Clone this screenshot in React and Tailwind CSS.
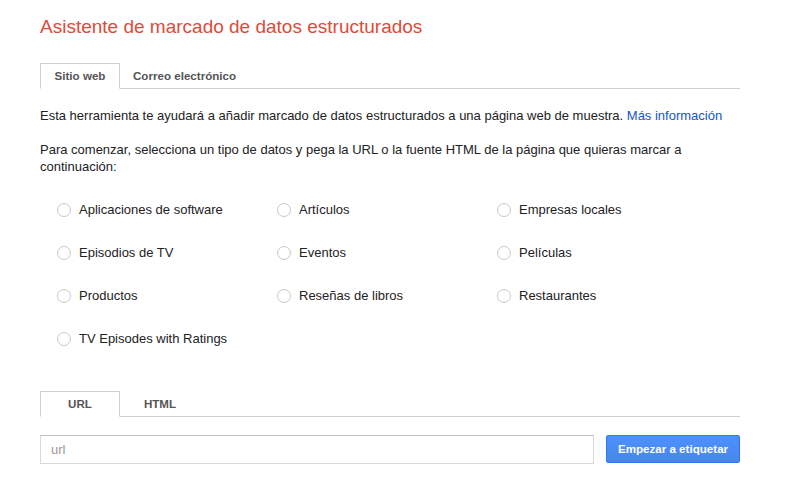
import React from "react";

const items = [
  "Aplicaciones de software",
  "Artículos",
  "Empresas locales",
  "Episodios de TV",
  "Eventos",
  "Películas",
  "Productos",
  "Reseñas de libros",
  "Restaurantes",
  "TV Episodes with Ratings",
];

function Tabs({ tabs }) {
  return (
    <div className="flex h-[26px] border-b border-[#d0d0d0]">
      {tabs.map((t, i) =>
        i === 0 ? (
          <div
            key={t}
            className="-mb-px h-[26px] min-w-[80px] px-[13px] border border-[#d0d0d0] border-b-white bg-white text-center text-[11.6px] font-bold leading-[24px] text-[#555]"
          >
            {t}
          </div>
        ) : (
          <div
            key={t}
            className="h-[25px] min-w-[80px] px-[13px] text-center text-[11.6px] font-bold leading-[26px] text-[#555]"
          >
            {t}
          </div>
        )
      )}
    </div>
  );
}

export default function App() {
  return (
    <div
      className="w-[800px] h-[500px] bg-white overflow-hidden"
      style={{ fontFamily: '"Liberation Sans", Arial, sans-serif' }}
    >
      <div className="ml-[40px] w-[700px] pt-[16px]">
        <h1 className="text-[19px] leading-[22px] font-normal text-[#dd4b39]">
          Asistente de marcado de datos estructurados
        </h1>
        <div className="mt-[25px]">
          <Tabs tabs={["Sitio web", "Correo electrónico"]} />
        </div>
        <p className="mt-[18px] text-[13px] leading-[17px] text-[#222]">
          Esta herramienta te ayudará a añadir marcado de datos estructurados a una página web de muestra.{" "}
          <a className="text-[#15c]">Más información</a>
        </p>
        <p className="mt-[17px] text-[13px] leading-[17px] text-[#222]">
          Para comenzar, selecciona un tipo de datos y pega la URL o la fuente HTML de la página que quieras marcar a continuación:
        </p>
        <div className="mt-[13px] pl-[17px] grid grid-cols-[220px_220px_220px]">
          {items.map((it) => (
            <div key={it} className="h-[43px] flex items-center gap-[8px]">
              <span className="w-[14px] h-[14px] rounded-full border border-[#c8c8c8] bg-white shrink-0" />
              <span className="text-[13px] leading-[17px] text-[#222]">{it}</span>
            </div>
          ))}
        </div>
        <div className="mt-[31px]">
          <Tabs tabs={["URL", "HTML"]} />
        </div>
        <div className="mt-[18px] flex items-start">
          <input
            className="w-[554px] h-[29px] border border-[#d9d9d9] border-t-[#c0c0c0] pl-[10px] text-[13px] text-[#222] placeholder:text-[#999] outline-none"
            placeholder="url"
          />
          <button className="ml-[12px] w-[134px] h-[28px] rounded-[2px] border border-[#3079ed] bg-gradient-to-b from-[#4d90fe] to-[#4787ed] text-[11.6px] font-bold text-white">
            Empezar a etiquetar
          </button>
        </div>
      </div>
    </div>
  );
}
